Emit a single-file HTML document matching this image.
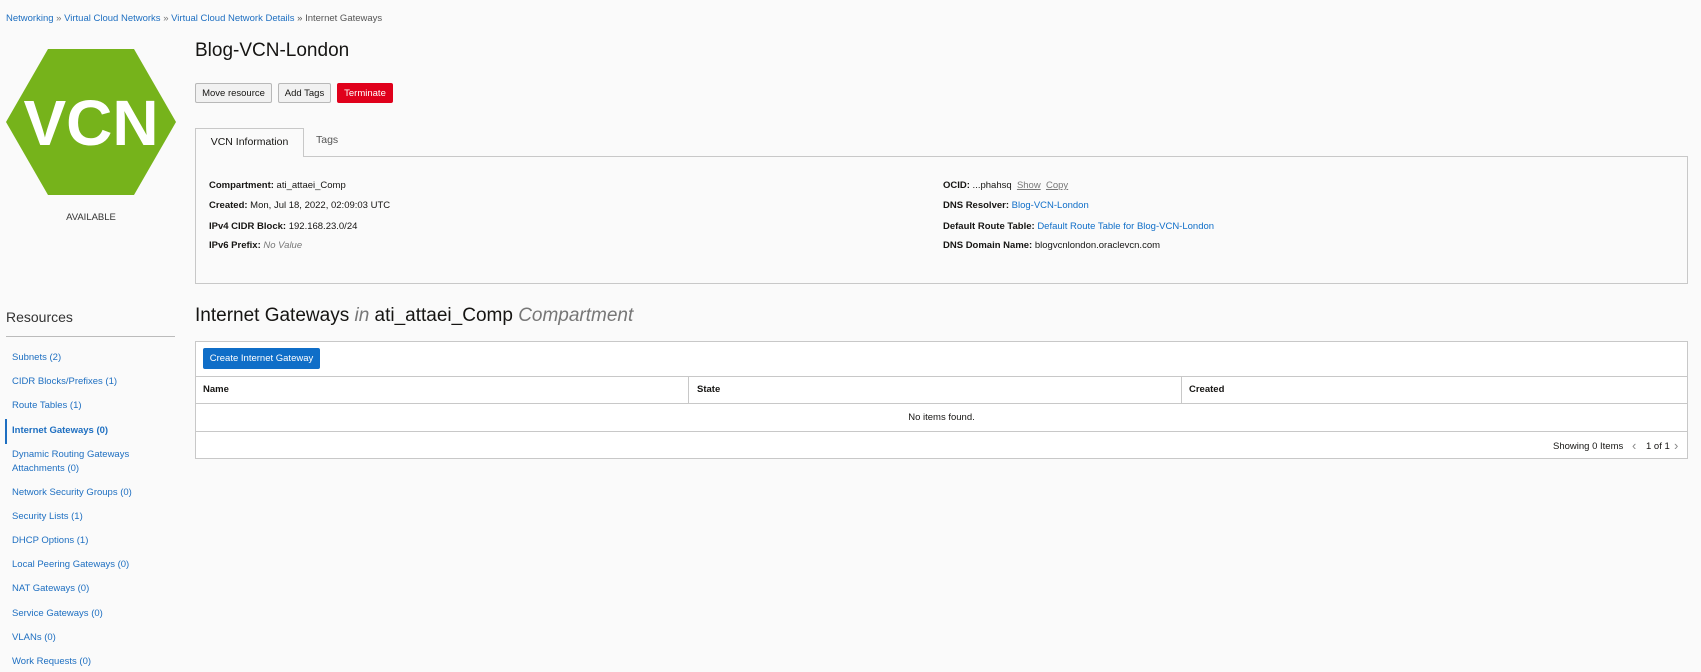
<!DOCTYPE html>
<html><head><style>
*{margin:0;padding:0;box-sizing:border-box}
body{width:1701px;height:672px;background:#fafafa;font-family:"Liberation Sans",Arial,sans-serif;color:#161513;position:relative;overflow:hidden;font-size:9.5px}
.a{position:absolute;white-space:nowrap}
a,.lk{color:#0f6ec8;text-decoration:none}
.btn{position:absolute;height:20px;border:1px solid #b8b8b8;background:#f1f1f1;border-radius:2px;font-size:9.5px;line-height:19px;text-align:center;color:#161513}
b{font-weight:bold}
.lst{position:absolute;left:12px;font-size:9.5px;color:#1e6fc1}
</style></head><body>
<div class="a" style="left:6px;top:13px;font-size:9.5px;color:#1e6fc1">Networking <span style="color:#777">»</span> Virtual Cloud Networks <span style="color:#777">»</span> Virtual Cloud Network Details <span style="color:#555">» Internet Gateways</span></div>

<svg class="a" style="left:6px;top:49px" width="170" height="146" viewBox="0 0 170 146">
<polygon points="42,0 128,0 170,73 128,146 42,146 0,73" fill="#76b31b"/>
<text x="85" y="96" text-anchor="middle" font-family="Liberation Sans,Arial,sans-serif" font-weight="bold" font-size="64" fill="#fff">VCN</text>
</svg>
<div class="a" style="left:51px;top:212px;width:80px;text-align:center;font-size:9.5px;color:#333">AVAILABLE</div>

<div class="a" style="left:195px;top:40px;font-size:19px;color:#161513">Blog-VCN-London</div>
<div class="btn" style="left:195px;top:83px;width:77px">Move resource</div>
<div class="btn" style="left:278px;top:83px;width:53px">Add Tags</div>
<div class="btn" style="left:337px;top:83px;width:56px;background:#e0001b;border-color:#e0001b;color:#fff">Terminate</div>

<div class="a" style="left:195px;top:128px;width:109px;height:29px;border:1px solid #c8c8c8;border-bottom:none;background:#fafafa;z-index:2;font-size:10.5px;text-align:center;line-height:27px">VCN Information</div>
<div class="a" style="left:316px;top:134px;font-size:10.5px;color:#555">Tags</div>
<div class="a" style="left:195px;top:156px;width:1493px;height:128px;border:1px solid #c8c8c8;background:#fafafa"></div>
<div class="a" style="left:209px;top:180px"><b>Compartment:</b> ati_attaei_Comp</div>
<div class="a" style="left:209px;top:200px"><b>Created:</b> Mon, Jul 18, 2022, 02:09:03 UTC</div>
<div class="a" style="left:209px;top:221px"><b>IPv4 CIDR Block:</b> 192.168.23.0/24</div>
<div class="a" style="left:209px;top:240px"><b>IPv6 Prefix:</b> <i style="color:#777">No Value</i></div>
<div class="a" style="left:943px;top:180px"><b>OCID:</b> ...phahsq &nbsp;<u style="color:#777">Show</u> &nbsp;<u style="color:#777">Copy</u></div>
<div class="a" style="left:943px;top:200px"><b>DNS Resolver:</b> <u class="lk">Blog-VCN-London</u></div>
<div class="a" style="left:943px;top:221px"><b>Default Route Table:</b> <u class="lk">Default Route Table for Blog-VCN-London</u></div>
<div class="a" style="left:943px;top:240px"><b>DNS Domain Name:</b> blogvcnlondon.oraclevcn.com</div>

<div class="a" style="left:6px;top:309px;font-size:14px;color:#333">Resources</div>
<div class="a" style="left:6px;top:336px;width:169px;height:1px;background:#bbb"></div>
<div class="a" style="left:5px;top:419px;width:2px;height:25px;background:#1e6fc1"></div>
<div class="lst" style="top:352px">Subnets (2)</div>
<div class="lst" style="top:376px">CIDR Blocks/Prefixes (1)</div>
<div class="lst" style="top:400px">Route Tables (1)</div>
<div class="lst" style="top:425px;font-weight:bold">Internet Gateways (0)</div>
<div class="lst" style="top:448px;line-height:14px">Dynamic Routing Gateways<br>Attachments (0)</div>
<div class="lst" style="top:487px">Network Security Groups (0)</div>
<div class="lst" style="top:511px">Security Lists (1)</div>
<div class="lst" style="top:535px">DHCP Options (1)</div>
<div class="lst" style="top:559px">Local Peering Gateways (0)</div>
<div class="lst" style="top:583px">NAT Gateways (0)</div>
<div class="lst" style="top:608px">Service Gateways (0)</div>
<div class="lst" style="top:632px">VLANs (0)</div>
<div class="lst" style="top:656px">Work Requests (0)</div>

<div class="a" style="left:195px;top:305px;font-size:19px;color:#161513">Internet Gateways <i style="color:#777">in</i> ati_attaei_Comp <i style="color:#777">Compartment</i></div>
<div class="a" style="left:195px;top:341px;width:1493px;height:118px;border:1px solid #c8c8c8;background:#fff"></div>
<div class="a" style="left:203px;top:348px;width:117px;height:21px;background:#0f6ec8;border-radius:2px;color:#fff;font-size:9.5px;line-height:21px;text-align:center">Create Internet Gateway</div>
<div class="a" style="left:196px;top:376px;width:1491px;height:1px;background:#c8c8c8"></div>
<div class="a" style="left:196px;top:403px;width:1491px;height:1px;background:#c8c8c8"></div>
<div class="a" style="left:196px;top:431px;width:1491px;height:1px;background:#c8c8c8"></div>
<div class="a" style="left:688px;top:377px;width:1px;height:26px;background:#c8c8c8"></div>
<div class="a" style="left:1181px;top:377px;width:1px;height:26px;background:#c8c8c8"></div>
<div class="a" style="left:203px;top:384px;font-weight:bold">Name</div>
<div class="a" style="left:697px;top:384px;font-weight:bold">State</div>
<div class="a" style="left:1189px;top:384px;font-weight:bold">Created</div>
<div class="a" style="left:196px;top:412px;width:1491px;text-align:center">No items found.</div>
<div class="a" style="left:1553px;top:441px">Showing 0 Items</div>
<div class="a" style="left:1632px;top:438px;font-size:13px;color:#888">‹</div>
<div class="a" style="left:1646px;top:441px">1 of 1</div>
<div class="a" style="left:1674px;top:438px;font-size:13px;color:#888">›</div>
</body></html>
